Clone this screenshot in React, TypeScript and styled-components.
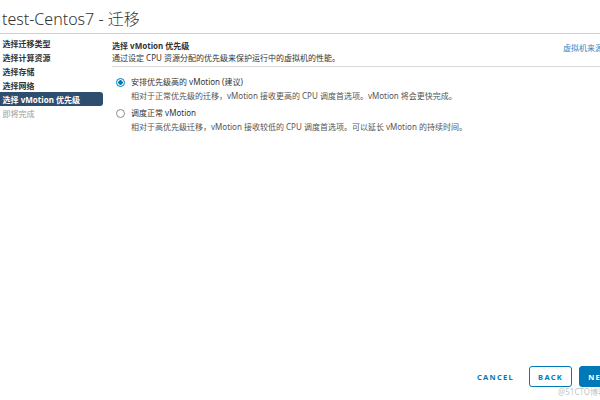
import React from 'react';
import styled, { createGlobalStyle } from 'styled-components';

const GlobalStyle = createGlobalStyle`
  body {
    margin: 0;
    background: #fff;
    font-family: "Noto Sans", "Noto Sans CJK SC", sans-serif;
    color: #333;
  }
`;

const Page = styled.div`
  position: relative;
  display: flex;
  flex-direction: column;
  width: 600px;
  height: 400px;
  overflow: hidden;
  background: #fff;
`;

const TitleBar = styled.div`
  display: flex;
  align-items: center;
  box-sizing: border-box;
  height: 34px;
  padding: 3px 0 0 2px;
  border-bottom: 1px solid #d0d0d0;
  font-family: "Noto Sans", "Noto Sans CJK SC", sans-serif;
  font-weight: 300;
  font-size: 16px;
  color: #333;
  white-space: nowrap;
`;

const Body = styled.div`
  display: flex;
  flex: 1;
  min-height: 0;
`;

const Nav = styled.ul`
  flex: 0 0 113px;
  margin: 0 0 0 -10px;
  padding: 2px 0 0;
  list-style: none;
`;

const Step = styled.li<{ $active?: boolean; $disabled?: boolean }>`
  display: flex;
  align-items: center;
  gap: 3px;
  height: 14px;
  padding-left: 5px;
  border-radius: 0 3px 3px 0;
  font-size: 8px;
  font-weight: ${({ $disabled }) => ($disabled ? 400 : 700)};
  white-space: nowrap;
  background: ${({ $active }) => ($active ? '#2f4d6e' : 'transparent')};
  color: ${({ $active, $disabled }) =>
    $active ? '#fff' : $disabled ? '#9a9a9a' : '#333'};
`;

const Main = styled.div`
  display: flex;
  flex-direction: column;
  flex: 1;
  padding-left: 9px;
`;

const Header = styled.div`
  display: flex;
  justify-content: space-between;
  align-items: flex-start;
  box-sizing: border-box;
  height: 33px;
  padding-top: 7px;
  border-bottom: 1px solid #d8d8d8;
`;

const HeaderText = styled.div`
  display: flex;
  flex-direction: column;
  gap: 2px;
  font-size: 8px;
  line-height: 10px;
  white-space: nowrap;
`;

const HeaderTitle = styled.div`
  font-weight: 700;
`;

const Source = styled.a`
  margin-right: -3px;
  padding-top: 2px;
  font-size: 8px;
  line-height: 10px;
  color: #3a86bf;
  white-space: nowrap;
`;

const Options = styled.div`
  display: flex;
  flex-direction: column;
  gap: 7px;
  padding: 10px 0 0 4px;
`;

const Option = styled.label`
  display: grid;
  grid-template-columns: 10px 1fr;
  column-gap: 5px;
  row-gap: 4px;
  align-items: center;
  font-size: 8px;
  line-height: 10px;
  white-space: nowrap;
`;

const Radio = styled.span<{ $checked?: boolean }>`
  box-sizing: border-box;
  width: 9px;
  height: 9px;
  border-radius: 50%;
  border: 1px solid ${({ $checked }) => ($checked ? '#0079b8' : '#8c8c8c')};
  background: ${({ $checked }) =>
    $checked ? 'radial-gradient(circle, #0079b8 0 2px, #fff 2.5px)' : '#fff'};
`;

const OptionLabel = styled.span`
  color: #333;
`;

const OptionDesc = styled.span`
  grid-column: 2;
  color: #555;
`;

const Footer = styled.div`
  display: flex;
  justify-content: flex-end;
  align-items: center;
  gap: 7px;
  margin: auto -22px 13px 0;
`;

const Button = styled.button<{ $variant: 'flat' | 'outline' | 'solid' }>`
  box-sizing: border-box;
  height: 21px;
  padding: 0 ${({ $variant }) => ($variant === 'flat' ? '7px' : '8px')};
  border-radius: 3px;
  font-family: "Noto Sans", sans-serif;
  font-size: 7.5px;
  font-weight: 700;
  letter-spacing: 1.3px;
  cursor: pointer;
  border: 1px solid ${({ $variant }) => ($variant === 'flat' ? 'transparent' : '#0079b8')};
  background: ${({ $variant }) => ($variant === 'solid' ? '#0079b8' : '#fff')};
  color: ${({ $variant }) => ($variant === 'solid' ? '#fff' : '#0079b8')};
`;

const Watermark = styled.span`
  position: absolute;
  right: -6px;
  bottom: 3px;
  font-size: 8px;
  color: rgba(150, 150, 150, 0.6);
  white-space: nowrap;
`;

const steps = ['选择迁移类型', '选择计算资源', '选择存储', '选择网络', '选择 vMotion 优先级', '即将完成'];

const App: React.FC = () => {
  return (
    <Page>
      <GlobalStyle />
      <TitleBar>test-Centos7 - 迁移</TitleBar>
      <Body>
        <Nav>
          {steps.map((s, i) => (
            <Step key={s} $active={i === 4} $disabled={i === 5}>
              <span>{i + 1}</span>
              <span>{s}</span>
            </Step>
          ))}
        </Nav>
        <Main>
          <Header>
            <HeaderText>
              <HeaderTitle>选择 vMotion 优先级</HeaderTitle>
              <div>通过设定 CPU 资源分配的优先级来保护运行中的虚拟机的性能。</div>
            </HeaderText>
            <Source>虚拟机来源</Source>
          </Header>
          <Options>
            <Option>
              <Radio $checked />
              <OptionLabel>安排优先级高的 vMotion (建议)</OptionLabel>
              <OptionDesc>
                相对于正常优先级的迁移，vMotion 接收更高的 CPU 调度首选项。vMotion 将会更快完成。
              </OptionDesc>
            </Option>
            <Option>
              <Radio />
              <OptionLabel>调度正常 vMotion</OptionLabel>
              <OptionDesc>
                相对于高优先级迁移，vMotion 接收较低的 CPU 调度首选项。可以延长 vMotion 的持续时间。
              </OptionDesc>
            </Option>
          </Options>
          <Footer>
            <Button $variant="flat">CANCEL</Button>
            <Button $variant="outline">BACK</Button>
            <Button $variant="solid">NEXT</Button>
          </Footer>
        </Main>
      </Body>
      <Watermark>@51CTO博客</Watermark>
    </Page>
  );
};

export default App;
